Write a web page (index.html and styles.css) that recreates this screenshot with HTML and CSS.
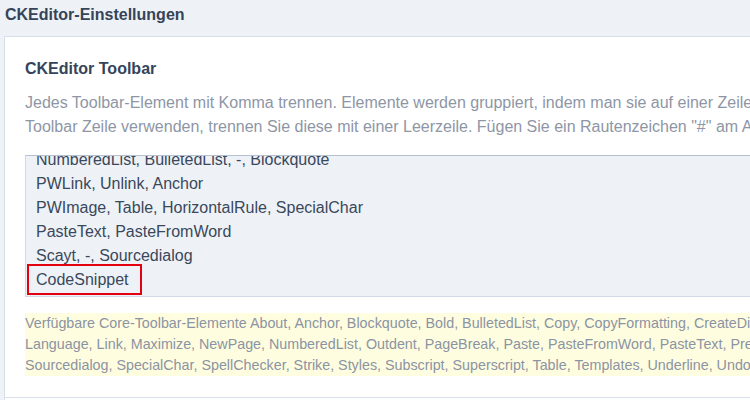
FILE: index.html
```html
<!DOCTYPE html>
<html lang="de">
<head>
<meta charset="utf-8">
<title>CKEditor-Einstellungen</title>
<link rel="stylesheet" href="styles.css">
</head>
<body>
<div class="page">
  <div class="header">CKEditor-Einstellungen</div>
  <div class="panel">
    <div class="field">
      <div class="label">CKEditor Toolbar</div>
      <div class="desc">Jedes Toolbar-Element mit Komma trennen. Elemente werden gruppiert, indem man sie auf einer Zeile platzieren. Um mehrere<br>Toolbar Zeile verwenden, trennen Sie diese mit einer Leerzeile. Fügen Sie ein Rautenzeichen "#" am Anfang einer Zeile hinzu, um sie auszukommentieren.</div>
      <div class="textarea">
        <div class="lines">
          <div>NumberedList, BulletedList, -, Blockquote</div>
          <div>PWLink, Unlink, Anchor</div>
          <div>PWImage, Table, HorizontalRule, SpecialChar</div>
          <div>PasteText, PasteFromWord</div>
          <div>Scayt, -, Sourcedialog</div>
          <div><span class="mark">CodeSnippet</span></div>
        </div>
      </div>
      <div class="notes">Verfügbare Core-Toolbar-Elemente About, Anchor, Blockquote, Bold, BulletedList, Copy, CopyFormatting, CreateDiv, Cut, Find, Flash, Font, FontSize, Format, HorizontalRule, Image, Indent, Italic, JustifyBlock,<br>Language, Link, Maximize, NewPage, NumberedList, Outdent, PageBreak, Paste, PasteFromWord, PasteText, Preview, Print, Redo, RemoveFormat, Replace, Save, Scayt, SelectAll, ShowBlocks, Smiley, Source,<br>Sourcedialog, SpecialChar, SpellChecker, Strike, Styles, Subscript, Superscript, Table, Templates, Underline, Undo, Unlink</div>
    </div>
    <div class="field next"></div>
  </div>
</div>
</body>
</html>
```
FILE: styles.css
```css
html, body {
  margin: 0;
  padding: 0;
  overflow: hidden;
  background: #eef2f7;
}
.page {
  width: 1500px;
  font-family: "Liberation Sans", Arial, sans-serif;
}
.header {
  height: 36px;
  box-sizing: border-box;
  padding: 5px 0 0 5px;
  font-size: 16px;
  line-height: 20px;
  font-weight: bold;
  color: #354459;
}
.panel {
  margin-left: 4px;
  background: #fff;
  border-top: 1px solid #d6dfea;
  border-left: 1px solid #d6dfea;
}
.field {
  padding: 22px 20px 21px 20px;
}
.label {
  font-size: 16px;
  line-height: 20px;
  font-weight: bold;
  color: #354459;
}
.desc {
  margin-top: 12px;
  font-size: 16px;
  line-height: 24px;
  color: #8e96a5;
  white-space: nowrap;
}
.textarea {
  margin-top: 16px;
  height: 140px;
  overflow: hidden;
  background: #eef2f7;
  border: 1px solid #cfd8e4;
  border-top-color: #b5c1d1;
  color: #3a485b;
  font-size: 16px;
  line-height: 24px;
}
.lines {
  margin-top: -8px;
  padding-left: 10px;
}
.mark {
  position: relative;
}
.mark::before {
  content: "";
  position: absolute;
  left: -9px;
  right: -13px;
  top: -7px;
  bottom: -7px;
  border: 2px solid #e3000f;
}
.notes {
  margin-top: 16px;
  background: #fffde0;
  color: #8b94a2;
  font-size: 14.3px;
  line-height: 21px;
  white-space: nowrap;
}
.next {
  border-top: 1px solid #d6dfea;
  height: 40px;
  padding: 0;
}
```
